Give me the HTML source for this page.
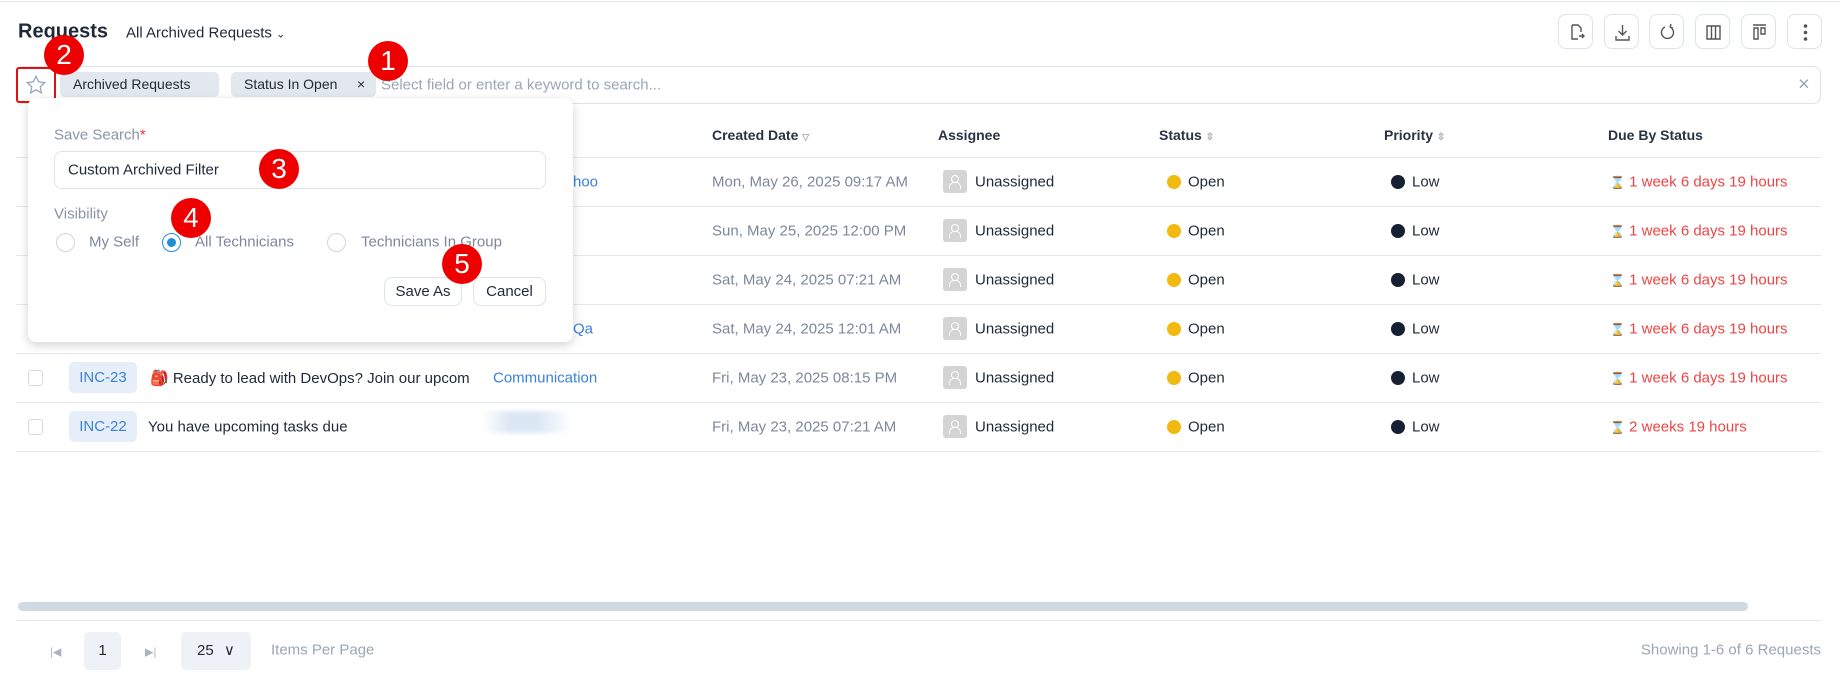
<!DOCTYPE html>
<html><head><meta charset="utf-8"><style>
*{box-sizing:border-box;margin:0;padding:0}
body{width:1840px;height:676px;background:#fff;font-family:"Liberation Sans",sans-serif;color:#1f2937;position:relative;overflow:hidden;font-size:15px}
.a{position:absolute;white-space:nowrap}
.c{transform:translateY(-50%)}
.tb{position:absolute;top:14px;width:35px;height:35px;border:1px solid #dde3ea;border-radius:8px;background:#fff}
.hl{position:absolute;left:16px;width:1805px;height:1px;background:#e3e8ef}
.gray{color:#7d889a}
.blue{color:#3b82d6}
.red{color:#ef4444}
.av{position:absolute;left:943px;width:24px;height:23px;background:#d4d4d4;border-radius:3px}
.av::after{content:"";position:absolute;left:8px;top:5px;width:6px;height:6px;border:1px solid #fff;border-radius:50%}
.av::before{content:"";position:absolute;left:6px;top:12px;width:10px;height:6px;border:1px solid #fff;border-radius:5px 5px 0 0;border-bottom:none}
.dot{position:absolute;width:14px;height:14px;border-radius:50%}
.num{position:absolute;width:40px;height:40px;border-radius:50%;background:#e00;color:#fff;font-size:28px;text-align:center;line-height:40px;font-family:"Liberation Sans",sans-serif}
.chip{position:absolute;top:72px;height:25px;background:#e3e8ef;border-radius:5px;font-size:14px;line-height:25px;padding-left:13px}
.radio{position:absolute;top:233px;width:19px;height:19px;border:1px solid #cfd5dd;border-radius:50%}
.btn{position:absolute;top:277px;height:29px;border:1px solid #dde3ea;border-radius:8px;font-size:15px;line-height:27px;text-align:center;background:#fff}
.inc{position:absolute;left:69px;width:68px;height:31px;background:#e6eef9;border-radius:5px;color:#3b82d6;font-size:15px;line-height:31px;text-align:center}
.cb{position:absolute;left:28px;width:15px;height:16px;border:1px solid #d6dbe2;border-radius:3px}
.h{font-weight:bold;font-size:14px;color:#2a3342}
</style></head><body>
<div style="position:absolute;top:1px;left:0;width:1840px;height:1px;background:#e3e8ef"></div>
<div class="a c" style="left:18px;top:32px;font-size:20px;font-weight:bold;color:#1f2937">Requests</div>
<div class="a c" style="left:126px;top:33px;font-size:15px">All Archived Requests <span style="font-size:11px">&#8964;</span></div>

<div class="tb" style="left:1558px"><svg width="35" height="35" viewBox="0 0 35 35"><path d="M13 10h6l3 3v4M13 10v14h6M20 21h5m-2-2 2 2-2 2" fill="none" stroke="#555" stroke-width="1.4"/></svg></div>
<div class="tb" style="left:1604px"><svg width="35" height="35" viewBox="0 0 35 35"><path d="M17.5 10v10m-4-4 4 4 4-4M11 21v4h13v-4" fill="none" stroke="#555" stroke-width="1.4"/></svg></div>
<div class="tb" style="left:1649px"><svg width="35" height="35" viewBox="0 0 35 35"><path d="M20 12a6 6 0 1 1-5 0M20 12l1-3M20 12l3 1" fill="none" stroke="#555" stroke-width="1.4"/></svg></div>
<div class="tb" style="left:1695px"><svg width="35" height="35" viewBox="0 0 35 35"><path d="M11 11h13v13H11zM15.5 11v13M19.5 11v13" fill="none" stroke="#555" stroke-width="1.4"/></svg></div>
<div class="tb" style="left:1741px"><svg width="35" height="35" viewBox="0 0 35 35"><path d="M11 10h13M12 13h4v11h-4zM19 13h4v6h-4z" fill="none" stroke="#555" stroke-width="1.4"/></svg></div>
<div class="tb" style="left:1787px"><svg width="35" height="35" viewBox="0 0 35 35"><circle cx="17.5" cy="11" r="1.8" fill="#555"/><circle cx="17.5" cy="17.5" r="1.8" fill="#555"/><circle cx="17.5" cy="24" r="1.8" fill="#555"/></svg></div>

<div style="position:absolute;left:16px;top:66px;width:1805px;height:38px;border:1px solid #dde3ea;border-radius:8px"></div>
<div style="position:absolute;left:16px;top:67px;width:40px;height:36px;border:2px solid #e01010;border-radius:3px"></div>
<svg class="a" style="left:25px;top:74px" width="22" height="22" viewBox="0 0 24 24"><path d="M12 2.5l2.9 6.1 6.6.8-4.9 4.6 1.3 6.6L12 17.3l-5.9 3.3 1.3-6.6L2.5 9.4l6.6-.8z" fill="none" stroke="#8aa1c0" stroke-width="1.3"/></svg>
<div class="chip" style="left:60px;width:159px">Archived Requests</div>
<div class="chip" style="left:231px;width:145px">Status In Open <span style="position:absolute;left:126px">×</span></div>
<div class="a c" style="left:381px;top:85px;color:#9aa6b6">Select field or enter a keyword to search...</div>
<div class="a c" style="left:1798px;top:85px;color:#9aa6b6;font-size:20px">×</div>

<div class="a c h" style="left:712px;top:135px">Created Date <span style="color:#aaa;font-size:9px">▽</span></div>
<div class="a c h" style="left:938px;top:135px">Assignee</div>
<div class="a c h" style="left:1159px;top:135px">Status <span style="color:#aaa;font-size:10px">⇳</span></div>
<div class="a c h" style="left:1384px;top:135px">Priority <span style="color:#aaa;font-size:10px">⇳</span></div>
<div class="a c h" style="left:1608px;top:135px">Due By Status</div>

<div class="hl" style="top:157px"></div><div class="hl" style="top:206px"></div><div class="hl" style="top:255px"></div><div class="hl" style="top:304px"></div><div class="hl" style="top:353px"></div><div class="hl" style="top:402px"></div><div class="hl" style="top:451px"></div>

<div class="a c gray" style="left:712px;top:182px">Mon, May 26, 2025 09:17 AM</div>
<div class="a c gray" style="left:712px;top:231px">Sun, May 25, 2025 12:00 PM</div>
<div class="a c gray" style="left:712px;top:280px">Sat, May 24, 2025 07:21 AM</div>
<div class="a c gray" style="left:712px;top:329px">Sat, May 24, 2025 12:01 AM</div>
<div class="a c gray" style="left:712px;top:378px">Fri, May 23, 2025 08:15 PM</div>
<div class="a c gray" style="left:712px;top:427px">Fri, May 23, 2025 07:21 AM</div>

<div class="av" style="top:170px"></div><div class="av" style="top:219px"></div><div class="av" style="top:268px"></div><div class="av" style="top:317px"></div><div class="av" style="top:366px"></div><div class="av" style="top:415px"></div>
<div class="a c" style="left:975px;top:182px">Unassigned</div><div class="a c" style="left:975px;top:231px">Unassigned</div><div class="a c" style="left:975px;top:280px">Unassigned</div><div class="a c" style="left:975px;top:329px">Unassigned</div><div class="a c" style="left:975px;top:378px">Unassigned</div><div class="a c" style="left:975px;top:427px">Unassigned</div>

<div class="dot" style="left:1167px;top:175px;background:#f2b90f"></div><div class="dot" style="left:1167px;top:224px;background:#f2b90f"></div><div class="dot" style="left:1167px;top:273px;background:#f2b90f"></div><div class="dot" style="left:1167px;top:322px;background:#f2b90f"></div><div class="dot" style="left:1167px;top:371px;background:#f2b90f"></div><div class="dot" style="left:1167px;top:420px;background:#f2b90f"></div>
<div class="a c" style="left:1188px;top:182px">Open</div><div class="a c" style="left:1188px;top:231px">Open</div><div class="a c" style="left:1188px;top:280px">Open</div><div class="a c" style="left:1188px;top:329px">Open</div><div class="a c" style="left:1188px;top:378px">Open</div><div class="a c" style="left:1188px;top:427px">Open</div>

<div class="dot" style="left:1391px;top:175px;background:#162032"></div><div class="dot" style="left:1391px;top:224px;background:#162032"></div><div class="dot" style="left:1391px;top:273px;background:#162032"></div><div class="dot" style="left:1391px;top:322px;background:#162032"></div><div class="dot" style="left:1391px;top:371px;background:#162032"></div><div class="dot" style="left:1391px;top:420px;background:#162032"></div>
<div class="a c" style="left:1412px;top:182px">Low</div><div class="a c" style="left:1412px;top:231px">Low</div><div class="a c" style="left:1412px;top:280px">Low</div><div class="a c" style="left:1412px;top:329px">Low</div><div class="a c" style="left:1412px;top:378px">Low</div><div class="a c" style="left:1412px;top:427px">Low</div>

<div class="a c red" style="left:1610px;top:182px"><span style="font-size:12px">⌛</span> 1 week 6 days 19 hours</div>
<div class="a c red" style="left:1610px;top:231px"><span style="font-size:12px">⌛</span> 1 week 6 days 19 hours</div>
<div class="a c red" style="left:1610px;top:280px"><span style="font-size:12px">⌛</span> 1 week 6 days 19 hours</div>
<div class="a c red" style="left:1610px;top:329px"><span style="font-size:12px">⌛</span> 1 week 6 days 19 hours</div>
<div class="a c red" style="left:1610px;top:378px"><span style="font-size:12px">⌛</span> 1 week 6 days 19 hours</div>
<div class="a c red" style="left:1610px;top:427px"><span style="font-size:12px">⌛</span> 2 weeks 19 hours</div>

<div class="a c blue" style="left:573px;top:182px">hoo</div>
<div class="a c blue" style="left:573px;top:329px">Qa</div>

<div class="cb" style="top:370px"></div><div class="cb" style="top:419px"></div>
<div class="inc" style="top:362px">INC-23</div><div class="inc" style="top:411px">INC-22</div>
<div class="a c" style="left:150px;top:378px;width:319px;overflow:hidden">🎒 Ready to lead with DevOps? Join our upcoming</div>
<div class="a c" style="left:148px;top:427px">You have upcoming tasks due</div>
<div class="a c blue" style="left:493px;top:378px">Communication</div>
<div style="position:absolute;left:483px;top:411px;width:89px;height:22px;background:linear-gradient(90deg,#fff,#dbe7f5 30%,#dbe7f5 60%,#fff);filter:blur(2px)"></div>

<div style="position:absolute;left:28px;top:98px;width:545px;height:244px;background:#fff;border-radius:8px;box-shadow:0 3px 10px rgba(0,0,0,.18)"></div>
<div class="a c" style="left:54px;top:135px;color:#8a94a6">Save Search<span style="color:#e53935">*</span></div>
<div style="position:absolute;left:54px;top:151px;width:492px;height:38px;border:1px solid #dde3ea;border-radius:8px"></div>
<div class="a c" style="left:68px;top:170px">Custom Archived Filter</div>
<div class="a c" style="left:54px;top:214px;color:#8a94a6">Visibility</div>
<div class="radio" style="left:56px"></div>
<div class="radio" style="left:162px;border-color:#1e90d6"><div style="position:absolute;left:4px;top:4px;width:9px;height:9px;border-radius:50%;background:#1e90d6"></div></div>
<div class="radio" style="left:327px"></div>
<div class="a c gray" style="left:89px;top:242px">My Self</div>
<div class="a c gray" style="left:195px;top:242px">All Technicians</div>
<div class="a c gray" style="left:361px;top:242px">Technicians In Group</div>
<div class="btn" style="left:384px;width:78px">Save As</div>
<div class="btn" style="left:473px;width:73px">Cancel</div>

<div style="position:absolute;left:18px;top:602px;width:1730px;height:9px;background:#d0dae5;border-radius:5px"></div>
<div class="hl" style="top:620px"></div>
<div class="a c" style="left:50px;top:652px;color:#a8b4c4;font-size:11px">|◀</div>
<div style="position:absolute;left:84px;top:632px;width:37px;height:38px;background:#eef1f5;border-radius:5px;text-align:center;line-height:38px">1</div>
<div class="a c" style="left:145px;top:652px;color:#a8b4c4;font-size:11px">▶|</div>
<div style="position:absolute;left:181px;top:632px;width:70px;height:38px;background:#eef1f5;border-radius:5px;line-height:38px;padding-left:16px">25 <span style="margin-left:6px">∨</span></div>
<div class="a c" style="left:271px;top:650px;color:#9aa6b6">Items Per Page</div>
<div class="a c" style="right:19px;top:650px;color:#9aa6b6">Showing 1-6 of 6 Requests</div>

<div class="num" style="left:368px;top:41px">1</div>
<div class="num" style="left:44px;top:35px">2</div>
<div class="num" style="left:259px;top:149px">3</div>
<div class="num" style="left:171px;top:198px">4</div>
<div class="num" style="left:442px;top:244px">5</div>
</body></html>
